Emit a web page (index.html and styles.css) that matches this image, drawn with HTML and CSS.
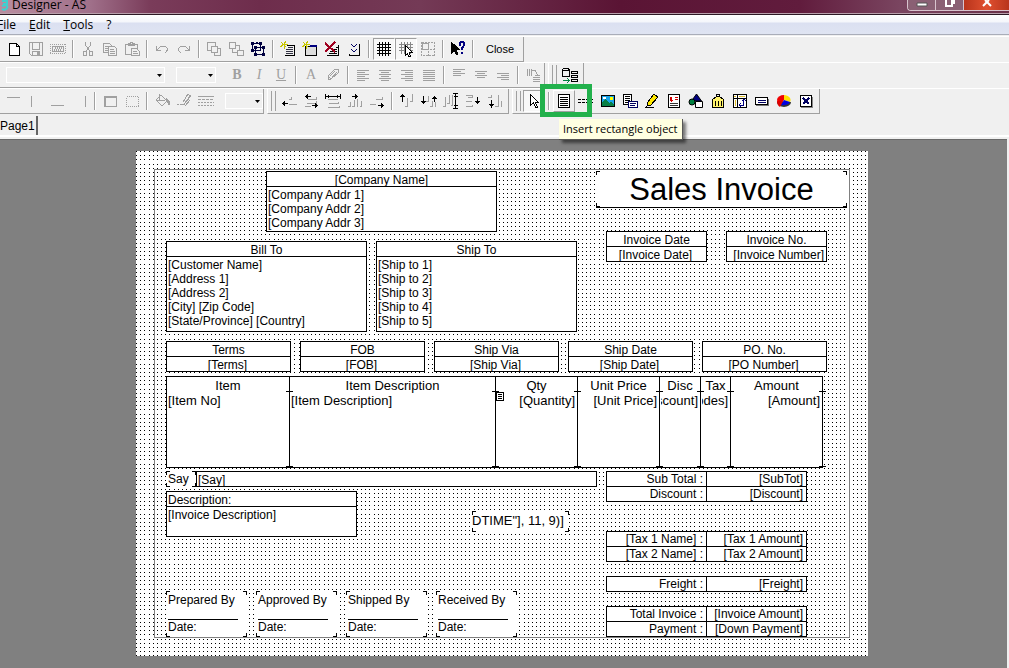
FILE: index.html
```
<!DOCTYPE html>
<html lang="en">
<head>
    <meta charset="UTF-8">
    <meta name="viewport" content="width=device-width, initial-scale=1.0">
    <title>Designer - AS</title>
    <link rel="stylesheet" href="styles.css">
</head>
<body>

    <header class="titlebar">
        <svg class="app-icon" width="8" height="12" viewBox="0 0 8 12"><path d="M0 1h5v3H1M0 6c4-2 6 0 5 2s-3 2-5 1" fill="none" stroke="#3fd0d0" stroke-width="2"/></svg>
        <span class="title">Designer - AS</span>
        <div class="window-buttons">
            <button class="win" aria-label="Minimize"><svg width="12" height="8"><path d="M1 3h10v3H1z" fill="#fff" stroke="#555"/></svg></button>
            <button class="win" aria-label="Restore"><svg width="12" height="8"><path d="M2 0v6h6V0M10 0v4" fill="none" stroke="#fff" stroke-width="2"/></svg></button>
            <button class="win win-close" aria-label="Close window"><svg width="12" height="8"><path d="M2 6l4-4 4 4M4 0l2 2 2-2" fill="none" stroke="#fff" stroke-width="2"/></svg></button>
        </div>
    </header>

    <nav class="menu">
        <a href="#"><u>F</u>ile</a>
        <a href="#"><u>E</u>dit</a>
        <a href="#"><u>T</u>ools</a>
        <a href="#">?</a>
    </nav>

    <div class="toolbars">
        <div class="bar-row">
            <div class="bar">
                <button class="tool on" aria-label="New"><svg width="16" height="16"><path d="M3.500 2.500h7l3 3v9h-10zM10.500 2.500v3h3" fill="#fff"/></svg></button>
                <button class="tool" aria-label="Save"><svg width="16" height="16"><path d="M1.500 1.500h13v13h-11l-2-2zM4.500 1.500v7h7v-7M4.500 14.500v-4h7v4M9.500 11v3M10.500 11v3M5 10.500h6"/></svg></button>
                <button class="tool" aria-label="Database"><svg width="16" height="16"><path d="M0 3.500h16M0 12.500h16M.5 3v10M15.500 3v10" stroke-dasharray="1 1"/><path d="M2.500 5.500h11v5h-11zM4 9.500l2-3M6 9.500l2-3M8 9.500l2-3M10 9.500l2-3"/></svg></button>
                <span class="sep"></span>
                <button class="tool" aria-label="Cut"><svg width="16" height="16"><path d="M5.500 1v3l4 6M10.500 1v3l-4 6M3.500 10.500h3v4h-3zM9.500 10.500h3v4h-3z"/></svg></button>
                <button class="tool" aria-label="Copy"><svg width="16" height="16"><path d="M1.500 2.500h6l2 2v7h-8zM3 5.500h4M3 7.500h4M3 9.500h3"/><path d="M6.500 5.500h6l2 2v7h-8zM8 8.500h4M8 10.500h5M8 12.500h5" fill="#f0f0f0"/></svg></button>
                <button class="tool" aria-label="Paste"><svg width="16" height="16"><path d="M1.500 3.500h12v10h-12zM4.500 4.500v-2h2v-1h2v1h2v2z"/><path d="M7.500 7.500h5l3 3v4h-8zM9 10.500h4M9 12.500h5" fill="#f0f0f0"/></svg></button>
                <span class="sep"></span>
                <button class="tool" aria-label="Undo"><svg width="16" height="16"><path d="M2.500 5v4.500H7M3 9l3-3q5-2 7 1 1 3-2 5"/></svg></button>
                <button class="tool" aria-label="Redo"><svg width="16" height="16"><path d="M13.500 5v4.500H9M13 9l-3-3Q5 4 3 7q-1 3 2 5"/></svg></button>
                <span class="sep"></span>
                <button class="tool" aria-label="Bring to front"><svg width="16" height="16"><path d="M1.500 1.500h8v8h-8z"/><path d="M5.500 5.500h6v6h-6z" fill="#f0f0f0"/><path d="M8 14.500h6.500V8M8.500 12v2.500M12 7.500h3"/></svg></button>
                <button class="tool" aria-label="Send to back"><svg width="16" height="16"><path d="M1.500 1.500h6v6h-6zM9.500 9.500h6v5h-6zM8 4.500h3.500V9M4.500 8v3.500H9"/></svg></button>
                <button class="tool on navy" aria-label="Group"><svg width="16" height="16"><path d="M2.500 2.500h8v7h-8zM5.500 6.500h8v7h-8z"/><path d="M1 1h3v3H1zM9 1h3v3H9zM1 8h3v3H1zM12 5h3v3h-3zM4 12h3v3H4zM12 12h3v3h-3zM6 1h2v2H6zM4 5h3v3H4z" fill="currentColor" stroke="none"/></svg></button>
                <span class="sep"></span>
                <button class="tool on" aria-label="New page"><svg width="16" height="16"><path d="M7 4.500h7.500v9.500M5 14.500h10"/><path d="M8 6.500h5M6 8.500h7M6 10.500h7M6 12.500h7" stroke="#334"/><path d="M1 1l5 5M6 0l-2 3M0 6l3-2M4 3v5M2 3h6" stroke="#c6c600"/></svg></button>
                <button class="tool on" aria-label="New dialog"><svg width="16" height="16"><path d="M3.500 5.500v9h11v-9z" fill="#ddd"/><path d="M8 5h7" stroke="#000080" stroke-width="2"/><path d="M1 1l5 5M6 0l-2 3M0 6l3-2M4 3v5M2 3h6" stroke="#c6c600"/></svg></button>
                <button class="tool on" aria-label="Delete page"><svg width="16" height="16"><path d="M3 14.500h11.500V4M12 6.500h2M9 8.500h4M6 10.500h7M5 12.500h8"/><path d="M1 2l10 9M11 1L1 11" stroke="#a00020" stroke-width="2"/></svg></button>
                <button class="tool on" aria-label="Page settings"><svg width="16" height="16"><path d="M3 14.500h10.500V3M3.500 13v2"/><path d="M5 3l3 3 3-3M5 8l3 3 3-3" stroke="#000060"/></svg></button>
                <span class="sep"></span>
                <button class="tool on pressed" aria-label="Show grid"><svg width="16" height="16"><path d="M3.500 1v14M6.500 1v14M9.500 1v14M12.500 1v14M1 3.500h14M1 6.500h14M1 9.500h14M1 12.500h14"/></svg></button>
                <button class="tool on pressed" aria-label="Align to grid"><svg width="16" height="16"><path d="M3.500 1v12M6.500 1v12M9.500 1v12M12.500 1v12M1 3.500h14M1 6.500h14M1 9.500h14" stroke="#888"/><path d="M7.500 4.500v10l2-2 1 3h2l-1-4h3z" fill="#fff"/></svg></button>
                <button class="tool" aria-label="Fit to grid"><svg width="16" height="16"><path d="M1.500 1.500h13v13h-13zM8.500 1v14M1 8.500h14" stroke-dasharray="2 1"/><path d="M2.500 2.500h6v6h-6z"/></svg></button>
                <span class="sep"></span>
                <button class="tool on" aria-label="Context help"><svg width="16" height="16"><path d="M1.500 1.500v11l3-3 2 4h1l-1-5h3z" fill="currentColor"/><path d="M10 5V3q0-2 2-2t2 2q0 2-2 4v2M12 11v2" stroke="#000080" stroke-width="2"/></svg></button>
                <span class="sep"></span>
                <button class="close">Close</button>
            </div>
        </div>

        <div class="bar-row">
            <div class="bar">
                <select class="combo font-name" aria-label="Font name"><option></option></select>
                <select class="combo font-size" aria-label="Font size"><option></option></select>
                <button class="tool letter"><b>B</b></button>
                <button class="tool letter"><i>I</i></button>
                <button class="tool letter"><u>U</u></button>
                <span class="sep"></span>
                <button class="tool letter">A</button>
                <button class="tool" aria-label="Highlight"><svg width="16" height="16"><path d="M3 9l7-7 4 1-1 3-7 6zM3 9v4l3-1M5 9l5-5M7 10l5-5"/></svg></button>
                <span class="sep"></span>
                <button class="tool" aria-label="Align left"><svg width="16" height="16"><path d="M2 3.500h12M2 5.500h8M2 7.500h12M2 9.500h8M2 11.500h12M2 13.500h8"/></svg></button>
                <button class="tool" aria-label="Center"><svg width="16" height="16"><path d="M2 3.500h12M4 5.500h8M2 7.500h12M4 9.500h8M2 11.500h12M4 13.500h8"/></svg></button>
                <button class="tool" aria-label="Align right"><svg width="16" height="16"><path d="M2 3.500h12M6 5.500h8M2 7.500h12M6 9.500h8M2 11.500h12M6 13.500h8"/></svg></button>
                <button class="tool" aria-label="Justify"><svg width="16" height="16"><path d="M2 3.500h12M2 5.500h12M2 7.500h12M2 9.500h12M2 11.500h12M2 13.500h12"/></svg></button>
                <span class="sep"></span>
                <button class="tool" aria-label="Align top"><svg width="16" height="16"><path d="M2 2.500h12M2 4.500h8M2 6.500h12M2 8.500h8"/></svg></button>
                <button class="tool" aria-label="Align middle"><svg width="16" height="16"><path d="M2 4.500h12M4 6.500h8M2 8.500h12M4 10.500h8"/></svg></button>
                <button class="tool" aria-label="Align bottom"><svg width="16" height="16"><path d="M2 6.500h12M6 8.500h8M2 10.500h12M6 12.500h8"/></svg></button>
                <span class="sep"></span>
                <button class="tool" aria-label="Rotate text"><svg width="16" height="16"><path d="M2.500 2v7M4.500 2v7M6.500 2v7M7 3.500h3l3 5M10 8.500h5M8 10.500h7M8 12.500h7M8 14.500h7"/></svg></button>
            </div>
            <div class="bar grip">
                <button class="tool on" aria-label="Insert field"><svg width="16" height="16"><path d="M.5 2.500q3-3 7 0v7h-7zM.5 2.500q3 3 7 0M9.500 4.500h6v2h-6zM9.500 8.500h6v2h-6zM9.500 12.500h6v2h-6z"/><path d="M1 13.500h6M5 11l2 2.500L5 16" stroke="#008040"/></svg></button>
            </div>
        </div>

        <div class="bar-row">
            <div class="bar">
                <button class="tool" aria-label="Top line"><svg width="16" height="16"><path d="M1 4.500h13"/></svg></button>
                <button class="tool" aria-label="Left line"><svg width="16" height="16"><path d="M3.500 3v11"/></svg></button>
                <button class="tool" aria-label="Bottom line"><svg width="16" height="16"><path d="M1 12.500h13"/></svg></button>
                <button class="tool" aria-label="Right line"><svg width="16" height="16"><path d="M13.500 3v11"/></svg></button>
                <span class="sep"></span>
                <button class="tool" aria-label="Full frame"><svg width="16" height="16"><path d="M2.500 3.500h12v10h-12z"/><path d="M4 4.500h10M3.500 4v9"/></svg></button>
                <button class="tool" aria-label="No frame"><svg width="16" height="16"><path d="M2.500 3.500h12v10h-12z" stroke-dasharray="1 1"/></svg></button>
                <span class="sep"></span>
                <button class="tool" aria-label="Fill color"><svg width="16" height="16"><path d="M2 7l5-5 6 6-5 5zM5.500 1v6M2 7h9"/><path d="M12 5l3 3v4l-2-4z" fill="currentColor"/></svg></button>
                <button class="tool" aria-label="Line color"><svg width="16" height="16"><path d="M1 11.500h2M4 11.500h4l7-9M7 9l5-8 2 2-5 7M9 13l5-6M8 11l5-6"/></svg></button>
                <button class="tool" aria-label="Line style"><svg width="16" height="16"><path d="M0 3.500h16"/><path d="M0 6.500h16" stroke-dasharray="3 1"/><path d="M0 9.500h16M0 12.500h16" stroke-dasharray="2 1"/></svg></button>
                <select class="combo line-width" aria-label="Line width"><option></option></select>
            </div>
            <div class="bar grip">
                <button class="tool mixed" aria-label="Align left edges"><svg width="16" height="16"><path d="M8 6.500h2v-3M8 11.500h8"/><path class="k" d="M1 10.500h6M3.500 8v5M2.500 9v3"/></svg></button>
                <button class="tool mixed" aria-label="Center horizontally"><svg width="16" height="16"><path d="M5 6.500h8v-3M2 13.500h6M4 10.500h9v-3"/><path class="k" d="M2 3.500h6M4.500 1v5M3.500 2v3M9 12.500h6M12.500 10v5M13.500 11v3"/></svg></button>
                <button class="tool mixed" aria-label="Space horizontally"><svg width="16" height="16"><path d="M3 6.500h10M4 10.500h9v-2M3 14.500h11v-2"/><path class="k" d="M.5 1v5M15.500 1v5M1 3.500h14M3.500 2v3M12.500 2v3"/></svg></button>
                <button class="tool mixed" aria-label="Center in window"><svg width="16" height="16"><path d="M1 13.500h2v-5M5 13.500h2v-7M10.500 6v7.500M14.500 8v5.500h-2"/><path class="k" d="M5 3.500h6M8.500 1v5M9.500 2v3"/></svg></button>
                <button class="tool mixed" aria-label="Align right edges"><svg width="16" height="16"><path d="M7 6.500h6v-3M1 11.500h6"/><path class="k" d="M9 12.500h6M12.500 10v5M13.500 11v3"/></svg></button>
                <span class="sep"></span>
                <button class="tool mixed" aria-label="Align tops"><svg width="16" height="16"><path d="M6 13.500h2V5M11 8.500h2V1"/><path class="k" d="M3.500 1v8M1 3.500h5M2 2.500h3"/></svg></button>
                <button class="tool mixed" aria-label="Center vertically"><svg width="16" height="16"><path d="M5 8.500h2V3M9 13.500h2V8M14.500 9v5"/><path class="k" d="M2.500 3v8M0 8.500h5M1 9.500h3M13.500 3v6M11 5.500h5M12 4.500h3"/></svg></button>
                <button class="tool mixed" aria-label="Space vertically"><svg width="16" height="16"><path d="M0 13.500h2V4M4 10.500h2V2M8 12.500h1V2"/><path class="k" d="M10 .5h5M10 15.500h5M12.500 1v14M11 3.500h4M11 12.500h4"/></svg></button>
                <button class="tool mixed" aria-label="Center vertically in window"><svg width="16" height="16"><path d="M1 2.500h6v2H3M1 8.500h6M1 13.500h6v-2"/><path class="k" d="M12.500 4v7M10 8.500h5M11 9.500h3"/></svg></button>
                <button class="tool mixed" aria-label="Align bottoms"><svg width="16" height="16"><path d="M1 4.500h3V2M8 13.500h3V2M14.500 8v5.500h-1"/><path class="k" d="M4.500 7v8M2 11.500h5M3 12.500h3"/></svg></button>
            </div>
            <div class="bar grip">
                <button class="tool on pressed" aria-label="Select object"><svg width="16" height="16"><path d="M4.500 1.500v11l3-3 2 5h2l-2-5h3z" fill="#fff"/></svg></button>
                <span class="sep"></span>
                <button class="tool on raised" aria-label="Insert rectangle object">
                    <svg width="16" height="16"><path d="M2.500 1.500h11v13h-11z" fill="#fff"/><path d="M4 4.500h8M4 6.500h8M4 8.500h8M4 10.500h8M4 12.500h8"/></svg>
                    <span class="highlight"></span>
                    <span class="tooltip">Insert rectangle object</span>
                </button>
                <button class="tool on" aria-label="Insert band"><svg width="16" height="16"><path d="M0 6.500h16M0 9.500h16" stroke-dasharray="3 1"/></svg></button>
                <button class="tool on" aria-label="Insert picture"><svg width="16" height="16"><path d="M1.500 2.500h13v11h-13z" fill="#19a4e8"/><path d="M2 12V9l3-3 4 4 2-1 3 3v1H2z" fill="#087f45" stroke="none"/><path d="M10 4h3v3h-3z" fill="#ff0" stroke="none"/><path d="M3 4h3v2H3z" fill="#fff" stroke="none"/></svg></button>
                <button class="tool on" aria-label="Insert subreport"><svg width="16" height="16"><path d="M1.500 1.500h8v10h-8zM3 3.500h5M3 5.500h5M3 7.500h5M3 9.500h3" fill="#fff"/><path d="M6.500 8.500h9v6h-9zM8 10.500h6M8 12.500h5" fill="#fff" stroke="#000060"/></svg></button>
                <button class="tool on" aria-label="Insert line"><svg width="16" height="16"><path d="M4 9l6-8 4 3-7 8-4 1z" fill="#ffe800"/><path d="M1 14.500h9M3 12l2 1"/></svg></button>
                <button class="tool on" aria-label="Insert rich text"><svg width="16" height="16"><path d="M2.500 1.500h11v13h-11z" fill="#fff"/><path d="M4 7.500h3M5.500 4v5M4 4v3M9 4.500h3M9 6.500h3" stroke="#d00000"/><path d="M4 10.500h8M4 12.500h8" stroke="#333"/></svg></button>
                <button class="tool on smooth" aria-label="Insert shape"><svg width="16" height="16"><path d="M8.500 1l5 7h-10z" fill="#000080"/><circle cx="4" cy="9" r="3" fill="#008040"/><path d="M7.500 8.500h7v6h-7z" fill="#fff"/></svg></button>
                <button class="tool on" aria-label="Insert bar code"><svg width="16" height="16"><path d="M2.500 6.500l4-3h3l4 3v8h-11z" fill="#fff36b"/><path d="M6.500 3V1.500h3V3M5.500 8v5M8.500 8v5M11.500 8v5"/></svg></button>
                <button class="tool on" aria-label="Insert cross table"><svg width="16" height="16"><path d="M1.500 1.500h13v13h-13zM5.500 1v13M1 5.500h13" fill="#fff"/><path d="M2 3.500h2M7 3.500h6M3.500 7v6" stroke="#e0c030"/><path d="M8 12.500h3l1-6M10 8l2-2 2 2M9 10l-2 2 2 2" stroke="#000080"/></svg></button>
                <button class="tool on" aria-label="Insert button"><svg width="16" height="16"><path d="M1.500 4.500h12v7h-12z" fill="#fff"/><path d="M2 12.500h12.500V6" stroke="#777"/><path d="M4 7.500h8M4 9.500h8" stroke="#000060"/></svg></button>
                <button class="tool smooth" aria-label="Insert chart"><svg width="16" height="16"><path d="M1 9a7 5 0 0 0 14 0z" fill="#333" stroke="none"/><path d="M8 7V2a7 5 0 0 0-7 5 7 5 0 0 0 4 4z" fill="#f00000" stroke="none"/><path d="M8 7V2a7 5 0 0 1 6 7z" fill="#ffe000" stroke="none"/><path d="M8 7l6 2a7 5 0 0 1-9 3z" fill="#0000e0" stroke="none"/><path d="M1 8l6 0-3 6q-3-2-3-6z" fill="#e00000" stroke="none"/></svg></button>
                <button class="tool on" aria-label="Insert ActiveX"><svg width="16" height="16"><path d="M3 14.500h11.500V4" stroke="#888"/><path d="M2.500 2.500h11v11h-11z" fill="#fff"/><path d="M5 5l6 6M11 5l-6 6" stroke="#000060" stroke-width="2"/></svg></button>
            </div>
        </div>
    </div>

    <div class="tabs"><button class="tab">Page1</button></div>

    <main class="workspace">
        <div class="sheet">
            <div class="margins"></div>

            <section class="object box company">
                <h2>[Company Name]</h2>
                <p>[Company Addr 1]<br>[Company Addr 2]<br>[Company Addr 3]</p>
            </section>

            <h1 class="object corners heading">Sales Invoice</h1>

            <section class="object box invoice-date">
                <h2>Invoice Date</h2>
                <div class="value">[Invoice Date]</div>
            </section>
            <section class="object box invoice-no">
                <h2>Invoice No.</h2>
                <div class="value">[Invoice Number]</div>
            </section>

            <section class="object box bill-to">
                <h2>Bill To</h2>
                <p>[Customer Name]<br>[Address 1]<br>[Address 2]<br>[City] [Zip Code]<br>[State/Province] [Country]</p>
            </section>
            <section class="object box ship-to">
                <h2>Ship To</h2>
                <p>[Ship to 1]<br>[Ship to 2]<br>[Ship to 3]<br>[Ship to 4]<br>[Ship to 5]</p>
            </section>

            <div class="object terms">
                <section class="box"><h2>Terms</h2><div class="value">[Terms]</div></section>
                <section class="box"><h2>FOB</h2><div class="value">[FOB]</div></section>
                <section class="box"><h2>Ship Via</h2><div class="value">[Ship Via]</div></section>
                <section class="box"><h2>Ship Date</h2><div class="value">[Ship Date]</div></section>
                <section class="box"><h2>PO. No.</h2><div class="value">[PO Number]</div></section>
            </div>

            <table class="object items">
                <colgroup>
                    <col class="c-item"><col class="c-desc"><col class="c-price"><col class="c-price"><col class="c-disc"><col class="c-tax"><col class="c-amount">
                </colgroup>
                <tr>
                    <th>Item</th><th>Item Description</th><th>Qty</th><th>Unit Price</th><th>Disc</th><th>Tax</th><th>Amount</th>
                </tr>
                <tr>
                    <td>[Item No]</td>
                    <td>[Item Description]</td>
                    <td class="num">
                        <svg class="memo" width="9" height="9"><path d="M.5.5h7v8h-7zM2 2.500h4M2 4.500h4M2 6.500h4" fill="#fff" stroke="#000"/></svg>
                        <div>[Quantity]</div>
                    </td>
                    <td class="num"><div>[Unit Price]</div></td>
                    <td class="num"><div>[Discount]</div></td>
                    <td class="num"><div>Codes]</div></td>
                    <td class="num"><div>[Amount]</div></td>
                </tr>
            </table>

            <div class="object say">
                <span class="say-label corners">Say</span>
                <span class="say-value">[Say]</span>
            </div>

            <section class="object box description">
                <h2>Description:</h2>
                <p>[Invoice Description]</p>
            </section>

            <div class="object corners datetime">DTIME"], 11, 9)]</div>

            <table class="object totals sub-total">
                <tr><th>Sub Total :</th><td>[SubTot]</td></tr>
                <tr><th>Discount :</th><td>[Discount]</td></tr>
            </table>
            <table class="object totals taxes">
                <tr><th>[Tax 1 Name] :</th><td>[Tax 1 Amount]</td></tr>
                <tr><th>[Tax 2 Name] :</th><td>[Tax 2 Amount]</td></tr>
            </table>
            <table class="object totals freight">
                <tr><th>Freight :</th><td>[Freight]</td></tr>
            </table>
            <table class="object totals payment">
                <tr><th>Total Invoice :</th><td>[Invoice Amount]</td></tr>
                <tr><th>Payment :</th><td>[Down Payment]</td></tr>
            </table>

            <div class="object signatures">
                <div class="corners sign">Prepared By<span class="rule"></span>Date:</div>
                <div class="corners sign">Approved By<span class="rule"></span>Date:</div>
                <div class="corners sign">Shipped By<span class="rule"></span>Date:</div>
                <div class="corners sign">Received By<span class="rule"></span>Date:</div>
            </div>
        </div>
    </main>

</body>
</html>
```
FILE: styles.css
```
* {
    box-sizing: border-box;
}

body {
    margin: 0;
    min-height: 100vh;
    display: flex;
    flex-direction: column;
    background: #f0f0f0;
    font-family: "Liberation Sans", Arial, sans-serif;
    font-size: 12px;
    color: #000;
    overflow: hidden;
}

button {
    padding: 0;
    border: none;
    background: none;
    font: inherit;
    color: inherit;
}

h1, h2, p {
    margin: 0;
    font-weight: normal;
}

/* window frame */

.titlebar {
    display: flex;
    height: 15px;
    background: linear-gradient(90deg, #b98da0 0, #a0708a 90px, #7a3c5a 150px, #6e2d4c 260px, #743a56 420px, #5a1434 620px, #611c3d 800px, #7a4560 900px, #6a3048 100%);
    border-bottom: 1px solid #2c1824;
    box-shadow: inset 0 -1px #b9a0ac;
}

.app-icon {
    width: 12px;
    flex: none;
}

.title {
    font-family: "Open Sans", "Noto Sans", sans-serif;
    line-height: 9px;
}

.window-buttons {
    display: flex;
    margin-left: auto;
    height: 11px;
    border: 1px solid #d8c4ce;
    border-top: none;
    border-right: none;
    border-radius: 0 0 0 4px;
    overflow: hidden;
}

.win {
    display: flex;
    justify-content: center;
    width: 28px;
    background: #8a6074;
    border-right: 1px solid #d8c4ce;
}

.win-close {
    width: 45px;
    background: linear-gradient(90deg, #b8341c, #e05030 50%, #b8341c);
    border-right: none;
}

.menu {
    display: flex;
    gap: 13px;
    height: 20px;
    line-height: 20px;
    background: linear-gradient(#fff, #f4f6fb 7px, #dbe0f1 8px, #dfe4f2);
    border-bottom: 1px solid #a9adb9;
    font-family: "Open Sans", "Noto Sans", sans-serif;
}

.menu a {
    color: #000;
    text-decoration: none;
}

.menu a:first-child {
    margin-left: -3px;
}

/* toolbars */

.toolbars {
    padding-top: 1px;
}

.bar-row {
    display: flex;
    gap: 3px;
    height: 26px;
    border-top: 1px solid #fff;
}

.bar {
    display: flex;
    align-items: center;
    padding-left: 3px;
    border-right: 1px solid #a0a0a0;
    border-bottom: 1px solid #a0a0a0;
}

.grip {
    padding: 0 2px 0 10px;
    border-left: 1px solid #fff;
    background: linear-gradient(#a0a0a0, #a0a0a0) 3px 2px / 1px 20px no-repeat,
                linear-gradient(#a0a0a0, #a0a0a0) 7px 2px / 1px 20px no-repeat;
}

.sep {
    width: 8px;
    height: 18px;
    background: linear-gradient(90deg, #a0a0a0 1px, #fff 1px, #fff 2px, transparent 2px) 3px 0 no-repeat;
}

.tool {
    display: flex;
    align-items: center;
    justify-content: center;
    width: 22px;
    height: 22px;
    color: #a0a0a0;
}

.tool svg {
    flex: none;
    fill: none;
    stroke: currentColor;
    shape-rendering: crispEdges;
}

.tool.smooth svg {
    shape-rendering: auto;
}

.on {
    color: #000;
}

.navy {
    color: #000040;
}

.mixed .k {
    stroke: #000;
}

.pressed {
    background: #f8f8f8;
    border: 1px solid #a0a0a0;
    border-right-color: #fff;
    border-bottom-color: #fff;
}

.raised {
    position: relative;
    border: 1px solid #fff;
    border-right-color: #a0a0a0;
    border-bottom-color: #a0a0a0;
}

.letter {
    font-family: "Liberation Serif", serif;
    font-size: 14px;
}

.close {
    width: 46px;
    font-size: 11px;
}

.combo {
    appearance: none;
    height: 16px;
    border: 1px solid #fff;
    border-radius: 0;
    background: url("data:image/svg+xml,%3Csvg xmlns='http://www.w3.org/2000/svg' width='5' height='3'%3E%3Cpath d='M0 0h5L2.500 3z'/%3E%3C/svg%3E") right 2px center no-repeat;
}

.font-name {
    width: 159px;
    margin: 0 11px 0 3px;
}

.font-size {
    width: 40px;
    margin-right: 10px;
}

.line-width {
    width: 38px;
    margin-left: 8px;
}

.highlight {
    position: absolute;
    left: -14px;
    top: -7px;
    width: 52px;
    height: 33px;
    border: 5px solid #22b14c;
    z-index: 1;
}

.tooltip {
    position: absolute;
    left: 5px;
    top: 28px;
    padding: 0 4px;
    line-height: 20px;
    white-space: nowrap;
    background: #ffffe1;
    border-right: 1px solid #555;
    border-bottom: 1px solid #555;
    box-shadow: 3px 3px 3px rgba(0, 0, 0, 0.5);
    font-family: "Open Sans", "Noto Sans", sans-serif;
    font-size: 11px;
    z-index: 2;
}

.tabs {
    height: 23px;
    padding-top: 2px;
    border-bottom: 2px solid #fff;
}

.tab {
    width: 38px;
    height: 19px;
    padding-right: 7px;
    border-right: 2px solid #666;
    text-align: right;
}

/* report page */

.workspace {
    flex: 1;
    margin: 2px 2px 0 0;
    padding: 11px 3px 0 0;
    background: #808080;
    border-top: 1px solid #696969;
}

.sheet {
    position: relative;
    width: 732px;
    height: 505px;
    margin: 0 auto;
    line-height: 14px;
    background: #fff url("data:image/svg+xml,%3Csvg xmlns='http://www.w3.org/2000/svg' width='25' height='25'%3E%3Cpath d='M0 .5h25M0 4.500h25M0 8.500h25M0 13.500h25M0 17.500h25M0 21.500h25' stroke='%23000' stroke-dasharray='1 3 1 3 1 4 1 3 1 3 1 3' shape-rendering='crispEdges'/%3E%3C/svg%3E");
}

.margins {
    position: absolute;
    inset: 18px;
    border: 1px solid #808080;
}

.object {
    position: absolute;
}

.box {
    background: #fff;
    border: 1px solid #000;
}

.box h2 {
    height: 15px;
    border-bottom: 1px solid #000;
    font-size: 12px;
    line-height: 16px;
    text-align: center;
}

.box p {
    padding: 1px;
}

.box .value {
    height: 14px;
    padding-right: 2px;
    line-height: 16px;
    text-align: center;
}

.corners {
    --ink: linear-gradient(#000, #000);
    background: var(--ink) 0 0 / 4px 1px, var(--ink) 0 0 / 1px 4px,
                var(--ink) 100% 0 / 4px 1px, var(--ink) 100% 0 / 1px 4px,
                var(--ink) 0 100% / 4px 1px, var(--ink) 0 100% / 1px 4px,
                var(--ink) 100% 100% / 4px 1px, var(--ink) 100% 100% / 1px 4px;
    background-repeat: no-repeat;
    background-color: #fff;
}

.company {
    left: 130px;
    top: 20px;
    width: 231px;
    height: 61px;
}

.heading {
    left: 460px;
    top: 20px;
    width: 251px;
    height: 37px;
    border-bottom: 1px solid #000;
    font-size: 31px;
    line-height: 38px;
    text-align: center;
}

.invoice-date, .invoice-no {
    top: 80px;
    width: 101px;
    height: 31px;
}

.invoice-date {
    left: 470px;
}

.invoice-no {
    left: 590px;
}

.invoice-no .value {
    text-align: right;
}

.bill-to, .ship-to {
    top: 90px;
    width: 201px;
    height: 91px;
}

.bill-to {
    left: 30px;
}

.ship-to {
    left: 240px;
}

.terms {
    display: flex;
    gap: 9px;
    left: 30px;
    top: 190px;
}

.terms .box {
    width: 125px;
    height: 31px;
}

.items {
    left: 30px;
    top: 225px;
    width: 657px;
    table-layout: fixed;
    border-collapse: separate;
    border-spacing: 0;
    background: #fff;
    border: 1px solid #000;
    border-right: none;
    font-size: 13px;
}

.c-item { width: 123px; }
.c-desc { width: 206px; }
.c-price { width: 82px; }
.c-disc { width: 41px; }
.c-tax { width: 30px; }
.c-amount { width: 92px; }

.items th, .items td {
    position: relative;
    padding: 0 1px;
    border-right: 1px solid #000;
    font-weight: normal;
}

.items th {
    height: 15px;
    padding-top: 2px;
    line-height: 13px;
}

.items td {
    height: 75px;
    padding-top: 1px;
    line-height: 15px;
    vertical-align: top;
}

.items .num {
    padding-right: 2px;
}

/* resize ticks across each column line */
.items td::before, .items td::after {
    content: "";
    position: absolute;
    right: -4px;
    width: 7px;
    height: 1px;
    background: #000;
}

.items td::before {
    top: -1px;
}

.items td::after {
    bottom: 0;
}

.num div {
    display: flex;
    justify-content: flex-end;
    overflow: hidden;
}

.memo {
    position: absolute;
    left: 0;
    top: 0;
    shape-rendering: crispEdges;
}

.say {
    display: flex;
    left: 30px;
    top: 320px;
    width: 431px;
    height: 16px;
    line-height: 17px;
}

.say-label {
    width: 30px;
    padding-left: 2px;
}

.say-value {
    flex: 1;
    padding-left: 1px;
    background: #fff;
    border: 1px solid #000;
    line-height: 16px;
}

.description {
    left: 30px;
    top: 340px;
    width: 191px;
    height: 46px;
}

.description h2 {
    padding-left: 1px;
    text-align: left;
}

.datetime {
    left: 336px;
    top: 360px;
    width: 97px;
    height: 21px;
    font-size: 13px;
    line-height: 20px;
    white-space: nowrap;
}

.totals {
    left: 470px;
    width: 201px;
    table-layout: fixed;
    border-collapse: collapse;
    background: #fff;
}

.totals th, .totals td {
    height: 15px;
    padding: 1px 3px 0 0;
    border: 1px solid #000;
    font-weight: normal;
    line-height: 13px;
    text-align: right;
    white-space: nowrap;
}

.sub-total { top: 320px; }
.taxes { top: 380px; }
.freight { top: 425px; }
.payment { top: 455px; }

.signatures {
    display: flex;
    gap: 9px;
    left: 30px;
    top: 440px;
}

.sign {
    width: 81px;
    height: 46px;
    padding: 2px;
    line-height: 15px;
}

.rule {
    display: block;
    width: 70px;
    height: 12px;
    border-bottom: 1px solid #000;
}
```
